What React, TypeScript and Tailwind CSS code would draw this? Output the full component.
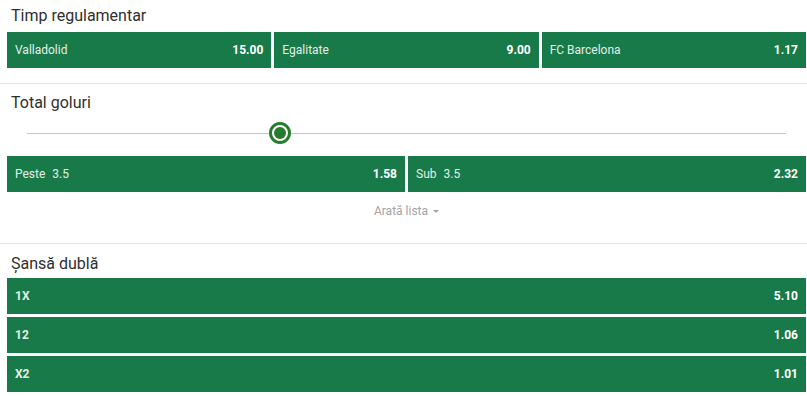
type Odd = { label: string; value: string; line?: string };

const regular: Odd[] = [
  { label: "Valladolid", value: "15.00" },
  { label: "Egalitate", value: "9.00" },
  { label: "FC Barcelona", value: "1.17" },
];

const goals: Odd[] = [
  { label: "Peste", line: "3.5", value: "1.58" },
  { label: "Sub", line: "3.5", value: "2.32" },
];

const double: Odd[] = [
  { label: "1X", value: "5.10" },
  { label: "12", value: "1.06" },
  { label: "X2", value: "1.01" },
];

function OddButton({ odd, bold }: { odd: Odd; bold?: boolean }) {
  return (
    <button className="flex-1 h-9 bg-[#187a48] flex items-center justify-between px-2 text-left">
      <span className={`text-[12px] text-[#e3efe8] ${bold ? "font-bold" : ""}`}>
        {odd.label}
        {odd.line && <span className="ml-[7px]">{odd.line}</span>}
      </span>
      <span className="text-[12px] font-bold text-white">{odd.value}</span>
    </button>
  );
}

export default function App() {
  return (
    <div className="w-[807px] h-[396px] bg-white overflow-hidden font-['Roboto',sans-serif]">
      {/* Timp regulamentar */}
      <div className="pl-[7px] pr-px pb-[15px] border-b border-[#e2e2e2]">
        <div className="h-8 flex items-center pl-1 text-[16px] text-[#2f2f2f]">Timp regulamentar</div>
        <div className="flex gap-[3px]">
          {regular.map((o) => (
            <OddButton key={o.label} odd={o} />
          ))}
        </div>
      </div>

      {/* Total goluri */}
      <div className="pl-[7px] pr-px pt-[7px] pb-[13px] border-b border-[#e2e2e2]">
        <div className="h-6 flex items-center pl-1 text-[16px] text-[#2f2f2f]">Total goluri</div>
        <div className="relative h-9">
          <div className="absolute left-5 right-5 top-[18px] h-px bg-[#c4c4c4]" />
          <div className="absolute left-[262px] top-[7px] w-[22px] h-[22px] rounded-full border-[3px] border-[#267c2d] bg-white flex items-center justify-center">
            <div className="w-[12px] h-[12px] rounded-full bg-[#267c2d]" />
          </div>
        </div>
        <div className="flex gap-[3px] mt-[5px]">
          {goals.map((o) => (
            <OddButton key={o.label} odd={o} />
          ))}
        </div>
        <div className="h-[38px] flex items-center justify-center text-[12px] text-[#a3a3a3]">
          Arată lista
          <span className="ml-[5px] mt-px w-0 h-0 border-l-[3px] border-r-[3px] border-t-[3px] border-l-transparent border-r-transparent border-t-[#a3a3a3]" />
        </div>
      </div>

      {/* Șansă dublă */}
      <div className="pl-[7px] pr-px pt-2">
        <div className="h-6 flex items-center pl-1 text-[16px] text-[#2f2f2f]">Șansă dublă</div>
        <div className="flex flex-col gap-[3px] mt-[2px]">
          {double.map((o) => (
            <div key={o.label} className="flex">
              <OddButton odd={o} bold />
            </div>
          ))}
        </div>
      </div>
    </div>
  );
}
